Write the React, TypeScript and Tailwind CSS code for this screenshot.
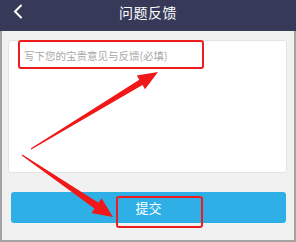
import React from "react";

function App() {
  const font = { fontFamily: '"Noto Sans CJK SC", "Noto Sans", sans-serif' };

  return (
    <div className="relative w-[296px] h-[242px] flex flex-col overflow-hidden" style={font}>
      <div className="relative h-[31px] bg-[#363a58] flex items-center justify-center pb-[8px]">
        <svg className="absolute left-[13px] top-[4px]" width="10" height="15" viewBox="0 0 10 15">
          <path d="M8 1.5 L2 7.5 L8 13.5" stroke="#fff" strokeWidth="2" fill="none" strokeLinecap="round" />
        </svg>
        <span className="text-white text-[14px] leading-none tracking-[0.5px]">问题反馈</span>
      </div>

      <div className="flex-1 bg-[#f1f1f1] border-x-2 border-b-2 border-[#a4a4a4] pl-[6px] pr-[7px] pt-[9px]">
        <div className="h-[133px] bg-white rounded-[3px] border border-[#e4e4e4] pl-[15px] pt-[10px]">
          <p className="text-[10.5px] leading-none text-[#a8a8a8]">写下您的宝贵意见与反馈(必填)</p>
        </div>
        <div className="mt-[19px] ml-[3px] mr-[1px] h-[31px] bg-[#2eb0e6] rounded-[3px] flex items-center justify-center">
          <span className="text-white text-[13px] leading-none">提交</span>
        </div>
      </div>

      <div className="absolute left-[18px] top-[40px] w-[186px] h-[29px] border-2 border-[#ee1c1c] rounded-[3px]" />
      <div className="absolute left-[116px] top-[196px] w-[87px] h-[32px] border-2 border-[#ee1c1c] rounded-[3px]" />

      <svg className="absolute left-0 top-0" width="296" height="242" viewBox="0 0 296 242">
        <polygon
          fill="#f01818"
          points="30.7,148.6 139.3,79.8 136.8,75.6 158,72 145,89.2 142.5,85 31.3,149.4"
        />
        <polygon
          fill="#f01818"
          points="22.3,154.6 98.5,202.8 101.6,198.3 113,217 91.4,213.1 94.5,208.6 21.7,155.4"
        />
      </svg>
    </div>
  );
}

export default App;
